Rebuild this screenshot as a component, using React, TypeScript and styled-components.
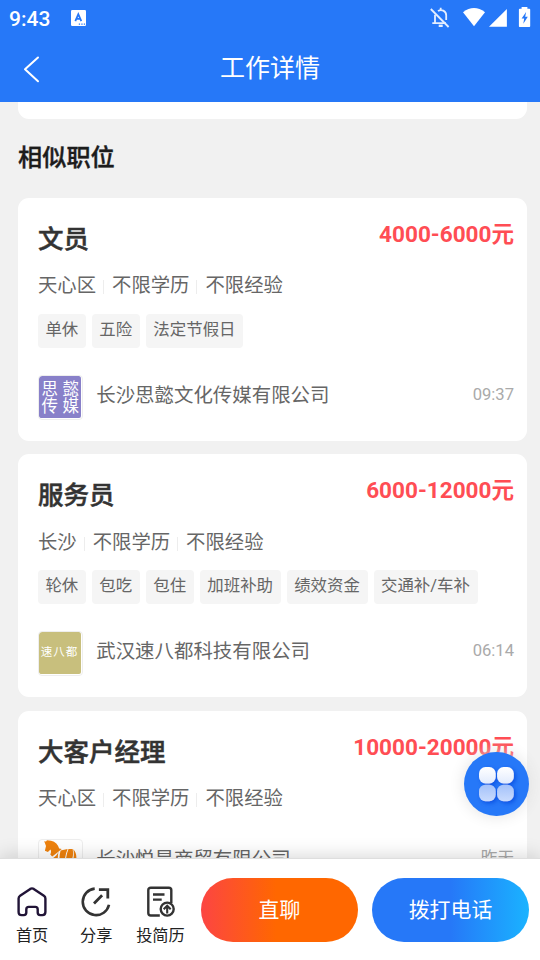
import React from 'react';
import styled, { createGlobalStyle } from 'styled-components';

const GlobalStyle = createGlobalStyle`
  *, *::before, *::after { box-sizing: border-box; }
  body {
    margin: 0;
    background: #f2f2f2;
    font-family: Roboto, "Noto Sans CJK SC", sans-serif;
    overflow: hidden;
  }
  h1, h2, h3 { margin: 0; }
  button { font-family: inherit; border: 0; padding: 0; background: none; }
  svg { display: block; flex: none; }
`;

const Screen = styled.div`
  position: relative;
  display: flex;
  flex-direction: column;
  width: 540px;
  height: 960px;
  overflow: hidden;
  background: #f1f1f1;
`;

const Header = styled.header`
  flex: none;
  height: 102px;
  background: #2678f8;
  color: #fff;
`;

const StatusBar = styled.div`
  display: flex;
  align-items: center;
  height: 36px;
  padding: 0 9px;
`;

const Clock = styled.span`
  width: 62px;
  font-size: 21px;
  font-weight: 500;
  line-height: 36px;
  padding-top: 2px;
`;

const StatusIcons = styled.div`
  display: flex;
  align-items: center;
  margin-left: auto;
`;

const NavBar = styled.div`
  display: grid;
  grid-template-columns: 64px 1fr 64px;
  height: 66px;
`;

const BackButton = styled.button`
  display: flex;
  align-items: center;
  padding-left: 23px;
`;

const PageTitle = styled.h1`
  text-align: center;
  font-size: 25px;
  font-weight: 400;
  line-height: 65px;
`;

const Content = styled.main`
  flex: 1;
  min-height: 0;
  overflow: hidden;
  padding: 0 13px 0 18px;
`;

const PreviousCard = styled.div`
  height: 17px;
  background: #fff;
  border-radius: 0 0 11px 11px;
`;

const SectionTitle = styled.h2`
  height: 79px;
  padding-top: 21px;
  font-size: 24.2px;
  line-height: 36px;
  font-weight: 500;
  -webkit-text-stroke: 0.4px #1c1c1c;
  color: #1c1c1c;
`;

const JobList = styled.div`
  display: flex;
  flex-direction: column;
  gap: 13.3px;
`;

const Card = styled.article`
  height: 243px;
  flex: none;
  padding: 0 13px 0 20px;
  border-radius: 11px;
  background: #fff;
`;

const CardHead = styled.div`
  display: flex;
  justify-content: space-between;
  height: 69px;
`;

const JobTitle = styled.h3`
  padding-top: 22px;
  font-size: 25.5px;
  line-height: 38px;
  font-weight: 500;
  -webkit-text-stroke: 0.5px #333;
  color: #333;
`;

const Salary = styled.span`
  padding-top: 22px;
  font-size: 22.55px;
  line-height: 30px;
  font-weight: 700;
  color: #ff4d54;
`;

const Meta = styled.div`
  display: flex;
  align-items: center;
  height: 36px;
  padding-top: 2.5px;
  font-size: 19.35px;
  line-height: 36px;
  color: #666;
`;

const MetaItem = styled.span`
  & + &::before {
    content: "";
    display: inline-block;
    width: 1px;
    height: 14px;
    margin: 0 8px 0 7px;
    vertical-align: -2px;
    background: #ededed;
  }
`;

const Tags = styled.div`
  display: flex;
  gap: 6px;
  margin-top: 11px;
`;

const Tag = styled.span`
  height: 34px;
  padding: 1px 7.7px 0 7.4px;
  border-radius: 4px;
  background: #f5f5f5;
  font-size: 16.45px;
  line-height: 30px;
  color: #666;
`;

const CompanyRow = styled.div<{ $top: number }>`
  display: flex;
  align-items: center;
  height: 45px;
  margin-top: ${(p) => p.$top}px;
`;

const Logo = styled.div<{ $bg: string }>`
  display: flex;
  align-items: center;
  justify-content: center;
  flex: none;
  width: 45px;
  height: 45px;
  padding: 0 1px 1px 0;
  border: 1px solid #eee;
  border-radius: 4px;
  background: ${(p) => p.$bg};
  background-clip: content-box;
  color: #fff;
  overflow: hidden;
`;

const SquareMark = styled.span`
  display: grid;
  grid-template-columns: 21px 16px;
  padding-top: 2px;
  font-size: 16.5px;
  line-height: 17px;
`;

const WideMark = styled.span`
  padding: 0 1px 3px 0;
  font-size: 11.5px;
  letter-spacing: 1px;
  white-space: nowrap;
`;

const Company = styled.span`
  margin-left: 13.2px;
  font-size: 19.45px;
  line-height: 30px;
  color: #666;
  padding-bottom: 3px;
`;

const Time = styled.span`
  margin-left: auto;
  padding-bottom: 5px;
  font-size: 16.6px;
  line-height: 28px;
  color: #aaa;
`;

const BottomBar = styled.footer`
  position: relative;
  flex: none;
  display: flex;
  height: 102px;
  padding: 20px 11px 0 0;
  background: #fff;
  border-top: 1px solid #dedede;
  box-shadow: 0 -2px 18px rgba(0, 0, 0, 0.16);
`;

const NavItems = styled.nav`
  display: flex;
  width: 201px;
`;

const NavItem = styled.button`
  display: flex;
  flex-direction: column;
  align-items: center;
  width: 64.2px;
  padding-top: 7px;
  font-size: 16.2px;
  line-height: 24px;
  gap: 6px;
  color: #222;
  white-space: nowrap;
`;

const Action = styled.button<{ $gradient: string }>`
  width: 157px;
  height: 64px;
  margin-top: -1px;
  padding-bottom: 4px;
  border-radius: 32px;
  background: linear-gradient(90deg, ${(p) => p.$gradient});
  color: #fff;
  font-size: 20.9px;

  & + & { margin-left: 14px; }
`;

const FloatingMenu = styled.button`
  position: absolute;
  top: 751.5px;
  right: 11px;
  display: grid;
  place-items: center;
  width: 65px;
  height: 64.5px;
  border-radius: 50%;
  background: #2678f8;
  box-shadow: 0 0 16px rgba(0, 0, 0, 0.12), 0 0 12px 2px rgba(255, 255, 255, 0.6);
`;

const InputBadge = () => (
  <svg width="15" height="16" viewBox="0 0 15 16">
    <rect width="15" height="16" rx="1.2" fill="#fff" />
    <path d="M4.3 11.2 7.3 4.2 10.3 11.2M5.3 8.8h4" fill="none" stroke="#2678f8" strokeWidth="1.8" />
    <path d="M7.8 14.2h1.3m1.2 0h1.3m1.2 0h1.3" stroke="#2678f8" strokeWidth="1.3" />
  </svg>
);

const StatusGlyphs = () => (
  <svg width="102" height="24" viewBox="429 6 102 24">
    <g fill="none" stroke="#fff" strokeWidth="1.8" opacity=".88">
      <path d="M435 14.7v8.5h11M432.3 23.2h3M438 11.1c3.2-2.4 8.2-.2 8.2 4.2v4.6M440.7 7.7v2.5" />
      <path d="m430.8 9 17.8 18" />
      <path d="M438.7 25.8h4" strokeWidth="2.4" />
    </g>
    <path d="M463 12.3q11-8.4 22 0L474 26.3z" fill="#fff" />
    <path d="M506.9 9v17.8H489z" fill="#fff" />
    <path d="M521.6 7h5.8v1.8h2c.4 0 .8.4.8.8v16.3c0 .6-.4 1-1 1h-9.3c-.6 0-1-.4-1-1V9.6c0-.4.4-.8.8-.8h1.9z" fill="#fff" />
    <path d="m526.1 12-4.5 6.4h2.6l-.9 5.3 4.5-7h-2.6z" fill="#2678f8" />
  </svg>
);

const BackIcon = () => (
  <svg width="17" height="27" viewBox="0 0 17 27">
    <path d="M15 1.5 2 13.3l13 12" fill="none" stroke="#fff" strokeWidth="2" strokeLinecap="round" strokeLinejoin="round" />
  </svg>
);

const HorseLogo = () => (
  <svg width="43" height="43" viewBox="0 0 43 43" fill="#ef820d">
    <path d="M5.2 2.2 7 2.4 8 1.2l4 .5c4.6 1 7 4.1 8.2 7.7l2.5.6c-3 2.4-6 5-9.5 7.6l-1.9-2.2c1-1.8.9-3.4.2-4.8l-2.6 2.4-3-1.3 1.1-4.7z" />
    <path d="M19.5 12.6c-1 3.2-3.5 5.6-6.6 7 1.1 4.2 3.6 6.1 6.4 7.4-.7-5.1-.7-9.6.2-14.4z" />
    <path d="m21.6 11.4 7-1.3c-2.1 5.2-3.2 10.6-3 16.9l-4.9-1c-.5-5.2-.4-9.9.9-14.6z" />
    <path d="M29.5 10h4.1c1 4.5.3 8.7-1.4 12.6l-5.5 3.9c-.2-5.7.8-11.5 2.8-16.5z" />
    <path d="M34.3 10.3c2.6 2.3 3.4 6.3 3 10.5L36 28l-2.7-4.3c1.5-4.3 2-8.6 1-13.4z" />
    <path d="m14 23 9 4 7-2 5 16h-4l-5-12-7 1-6 11H9l5-12z" />
  </svg>
);

const HomeIcon = () => (
  <svg width="32" height="32" viewBox="0 0 32 32" fill="none" stroke="#211437" strokeWidth="2.4" strokeLinejoin="round">
    <path d="M14.3 2.9q1.7-1 3.4 0l10.2 6.9q1.5 1 1.5 2.8v13.5q0 3-3 3h-2.2q-2.5 0-2.5-2.5v-3.2q0-2.5-2.5-2.5h-6.4q-2.5 0-2.5 2.5v3.2q0 2.5-2.5 2.5H5.6q-3 0-3-3V12.6q0-1.8 1.5-2.8z" />
  </svg>
);

const ShareIcon = () => (
  <svg width="32" height="32" viewBox="0 0 32 32" fill="none" stroke="#333" strokeWidth="2.6">
    <path d="M14.7 2.6A13.3 13.3 0 1 0 29 18.8" />
    <path d="m14 17.4 8.1-8.1M18.9 3.6h8.9v9" strokeWidth="2.8" />
  </svg>
);

const ResumeIcon = () => (
  <svg width="32" height="32" viewBox="0 0 32 32" fill="none" stroke="#333" strokeWidth="2.4">
    <path d="M15.8 29.5H6.8q-2.5 0-2.5-2.5V4Q4.3 1.7 6.8 1.7h18Q27.3 1.7 27.3 4v13" />
    <path d="M9 8.5h11.5M9 13.6h8.7" />
    <circle cx="23.2" cy="23.1" r="6.5" />
    <path d="M23.2 27.4v-7.5m-3.5 3.4 3.5-3.5 3.5 3.5" strokeWidth="2.1" />
  </svg>
);

const MenuIcon = () => (
  <svg width="50" height="50" viewBox="0 0 50 50">
    <defs>
      <linearGradient id="tileLight" x1="0" y1="0" x2="0" y2="1">
        <stop stopColor="#fff" /><stop offset="1" stopColor="#e2ebfd" />
      </linearGradient>
      <linearGradient id="tileBlue" x1="0" y1="0" x2="0" y2="1">
        <stop stopColor="#a4c2fa" /><stop offset="1" stopColor="#c9dbfd" />
      </linearGradient>
      <filter id="tileShadow" x="-30%" y="-30%" width="170%" height="170%">
        <feDropShadow dx="2" dy="2" stdDeviation="2" floodColor="#0042da" floodOpacity=".7" />
      </filter>
    </defs>
    <g filter="url(#tileShadow)">
      <rect x="7" y="8" width="16.7" height="16.5" rx="6.5" fill="url(#tileLight)" />
      <rect x="25.1" y="8" width="16.7" height="16.5" rx="6.5" fill="url(#tileLight)" />
      <rect x="7" y="25.7" width="16.7" height="16.5" rx="6.5" fill="url(#tileBlue)" />
      <rect x="25.1" y="25.7" width="16.7" height="16.5" rx="6.5" fill="url(#tileBlue)" />
    </g>
  </svg>
);

type Job = {
  title: string;
  salary: string;
  meta: string[];
  tags: string[];
  company: string;
  time: string;
  logoColor: string;
  logo: React.ReactNode;
};

const jobs: Job[] = [
  {
    title: '文员',
    salary: '4000-6000元',
    meta: ['天心区', '不限学历', '不限经验'],
    tags: ['单休', '五险', '法定节假日'],
    company: '长沙思懿文化传媒有限公司',
    time: '09:37',
    logoColor: '#8880c9',
    logo: <SquareMark><span>思</span><span>懿</span><span>传</span><span>媒</span></SquareMark>,
  },
  {
    title: '服务员',
    salary: '6000-12000元',
    meta: ['长沙', '不限学历', '不限经验'],
    tags: ['轮休', '包吃', '包住', '加班补助', '绩效资金', '交通补/车补'],
    company: '武汉速八都科技有限公司',
    time: '06:14',
    logoColor: '#c8bf7d',
    logo: <WideMark>速八都</WideMark>,
  },
  {
    title: '大客户经理',
    salary: '10000-20000元',
    meta: ['天心区', '不限学历', '不限经验'],
    tags: [],
    company: '长沙悦昊商贸有限公司',
    time: '昨天',
    logoColor: '#fff',
    logo: <HorseLogo />,
  },
];

const JobCard = ({ job }: { job: Job }) => (
  <Card>
    <CardHead>
      <JobTitle>{job.title}</JobTitle>
      <Salary>{job.salary}</Salary>
    </CardHead>
    <Meta>{job.meta.map((m) => <MetaItem key={m}>{m}</MetaItem>)}</Meta>
    {job.tags.length > 0 && <Tags>{job.tags.map((t) => <Tag key={t}>{t}</Tag>)}</Tags>}
    <CompanyRow $top={job.tags.length > 0 ? 26.5 : 23}>
      <Logo $bg={job.logoColor}>{job.logo}</Logo>
      <Company>{job.company}</Company>
      <Time>{job.time}</Time>
    </CompanyRow>
  </Card>
);

export default function App() {
  return (
    <>
      <GlobalStyle />
      <Screen>
        <Header>
          <StatusBar>
            <Clock>9:43</Clock>
            <InputBadge />
            <StatusIcons><StatusGlyphs /></StatusIcons>
          </StatusBar>
          <NavBar>
            <BackButton aria-label="返回"><BackIcon /></BackButton>
            <PageTitle>工作详情</PageTitle>
          </NavBar>
        </Header>
        <Content>
          <PreviousCard />
          <SectionTitle>相似职位</SectionTitle>
          <JobList>{jobs.map((job) => <JobCard key={job.title} job={job} />)}</JobList>
        </Content>
        <BottomBar>
          <NavItems>
            <NavItem><HomeIcon />首页</NavItem>
            <NavItem><ShareIcon />分享</NavItem>
            <NavItem><ResumeIcon />投简历</NavItem>
          </NavItems>
          <Action $gradient="#fc4543 0%, #ff6700 48%, #ff6700 100%">直聊</Action>
          <Action $gradient="#2678f8 0%, #2678f8 50%, #1ab3ff 100%">拨打电话</Action>
        </BottomBar>
        <FloatingMenu aria-label="菜单"><MenuIcon /></FloatingMenu>
      </Screen>
    </>
  );
}
